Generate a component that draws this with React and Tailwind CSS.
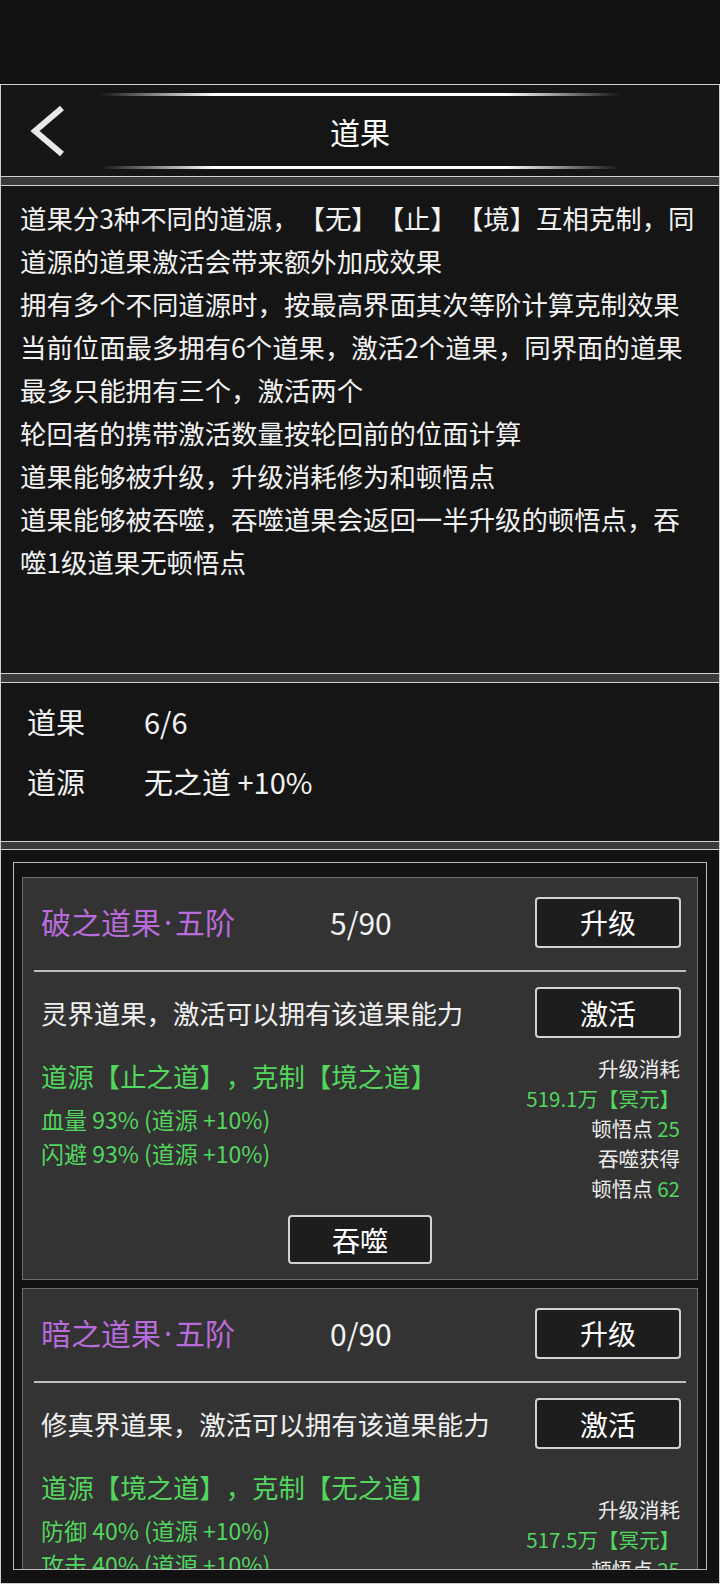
import React from "react";

const lines = [
  "道果分3种不同的道源，【无】【止】【境】互相克制，同",
  "道源的道果激活会带来额外加成效果",
  "拥有多个不同道源时，按最高界面其次等阶计算克制效果",
  "当前位面最多拥有6个道果，激活2个道果，同界面的道果",
  "最多只能拥有三个，激活两个",
  "轮回者的携带激活数量按轮回前的位面计算",
  "道果能够被升级，升级消耗修为和顿悟点",
  "道果能够被吞噬，吞噬道果会返回一半升级的顿悟点，吞",
  "噬1级道果无顿悟点",
];

const cards = [
  {
    name: "破之道果",
    tier: "五阶",
    count: "5/90",
    desc: "灵界道果，激活可以拥有该道果能力",
    source: "道源【止之道】，克制【境之道】",
    stats: ["血量 93% (道源 +10%)", "闪避 93% (道源 +10%)"],
    cost: "519.1万【冥元】",
    point: "25",
    eat: "62",
  },
  {
    name: "暗之道果",
    tier: "五阶",
    count: "0/90",
    desc: "修真界道果，激活可以拥有该道果能力",
    source: "道源【境之道】，克制【无之道】",
    stats: ["防御 40% (道源 +10%)", "攻击 40% (道源 +10%)"],
    cost: "517.5万【冥元】",
    point: "25",
  },
];

const GlowLine = () => (
  <div className="mx-auto h-[3px] w-[520px] bg-[linear-gradient(to_right,transparent,#ffffff_22%,#ffffff_78%,transparent)]" />
);

const Band = () => (
  <div className="h-[8px] bg-[#3a3a3a] border-x border-[#cfcfcf]" />
);

const Btn = ({ children, small }) => (
  <div
    className={
      "flex items-center justify-center rounded-[4px] border-2 border-[#d2d2d2] bg-[#1d1d1d] text-[28px] text-white " +
      (small ? "w-[144px] h-[49px]" : "w-[146px] h-[51px]")
    }
  >
    {children}
  </div>
);

const Card = ({ c }) => (
  <div className="border border-[#6e6e6e] bg-[#333333] pt-[18px] pb-[15px]">
    <div className="flex items-center pl-[18px] pr-[16px]">
      <span className="w-[289px] text-[30px] leading-[50px] text-[#b96bdc] whitespace-nowrap">
        {c.name}
        <span className="px-[3px]" style={{ fontFamily: '"Noto Sans", sans-serif' }}>·</span>
        {c.tier}
      </span>
      <span className="text-[30px] leading-[50px] text-[#f2f2f2]">{c.count}</span>
      <div className="ml-auto">
        <Btn>升级</Btn>
      </div>
    </div>
    <div className="mx-[11px] mt-[22px] h-[2px] bg-[#bdbdbd]" />
    <div className="mt-[15px] flex items-center pl-[18px] pr-[16px]">
      <span className="text-[26.4px] text-[#f0f0f0] whitespace-nowrap">{c.desc}</span>
      <div className="ml-auto">
        <Btn>激活</Btn>
      </div>
    </div>
    <div className="mt-[15px] flex items-center pl-[18px] pr-[17px]">
      <div className="h-[150px]">
        <div className="text-[26.4px] leading-[46px] text-[#52d65e] whitespace-nowrap">{c.source}</div>
        <div className="pt-[3px] text-[23px] leading-[34px] text-[#52d65e]">
          {c.stats.map((s) => (
            <div key={s} className="whitespace-nowrap">{s}</div>
          ))}
        </div>
      </div>
      <div className="ml-auto text-right text-[20.5px] leading-[30px] text-[#ececec]">
        <div>升级消耗</div>
        <div className="text-[#52d65e]">{c.cost}</div>
        <div>
          顿悟点 <span className="text-[#52d65e]">{c.point}</span>
        </div>
        {c.eat && (
          <>
            <div>吞噬获得</div>
            <div>
              顿悟点 <span className="text-[#52d65e]">{c.eat}</span>
            </div>
          </>
        )}
      </div>
    </div>
    {c.eat && (
      <div className="mt-[12px] flex justify-center">
        <Btn small>吞噬</Btn>
      </div>
    )}
  </div>
);

export default function App() {
  return (
    <div
      className="w-[720px] h-[1584px] overflow-hidden bg-[#121212] text-white [text-spacing-trim:space-all]"
      style={{ fontFamily: '"Noto Sans CJK SC", "Noto Sans", sans-serif' }}
    >
      <div className="h-[84px]" />

      {/* header */}
      <div className="h-[93px] border border-[#cfcfcf] bg-[#151515] pt-[8px]">
        <GlowLine />
        <div className="grid h-[70px] grid-cols-[100px_1fr_100px] items-center">
          <div className="pl-[28px]">
            <svg width="40" height="54" viewBox="0 0 40 54">
              <polyline points="33,4 6,27 33,50" fill="none" stroke="#e8e8e8" strokeWidth="6" />
            </svg>
          </div>
          <div className="text-center text-[30px] text-white">道果</div>
          <div />
        </div>
        <GlowLine />
      </div>
      <Band />

      {/* description */}
      <div className="h-[489px] border border-[#cfcfcf] bg-[#151515] px-[19px] pt-[10px] text-[26.4px] leading-[43px] text-[#f2f2f2]">
        {lines.map((l) => (
          <div key={l} className="whitespace-nowrap">{l}</div>
        ))}
      </div>
      <Band />

      {/* summary */}
      <div className="h-[160px] border border-[#cfcfcf] bg-[#151515] pl-[26px] pt-[8px] text-[29px] leading-[60px] text-[#f2f2f2]">
        <div className="flex">
          <span className="w-[117px]">道果</span>
          <span>6/6</span>
        </div>
        <div className="flex">
          <span className="w-[117px]">道源</span>
          <span>无之道 +10%</span>
        </div>
      </div>
      <div className="h-[7px] bg-[#3a3a3a] border-x border-[#cfcfcf]" />

      {/* list */}
      <div className="h-[735px] border border-[#cfcfcf] bg-[#121212] pt-[12px] pl-[12px]">
        <div className="h-[708px] w-[694px] overflow-hidden border border-[#bdbdbd] px-[8px] pt-[14px]">
          <div className="flex flex-col gap-[8px]">
            {cards.map((c) => (
              <Card key={c.name} c={c} />
            ))}
          </div>
        </div>
      </div>
    </div>
  );
}
